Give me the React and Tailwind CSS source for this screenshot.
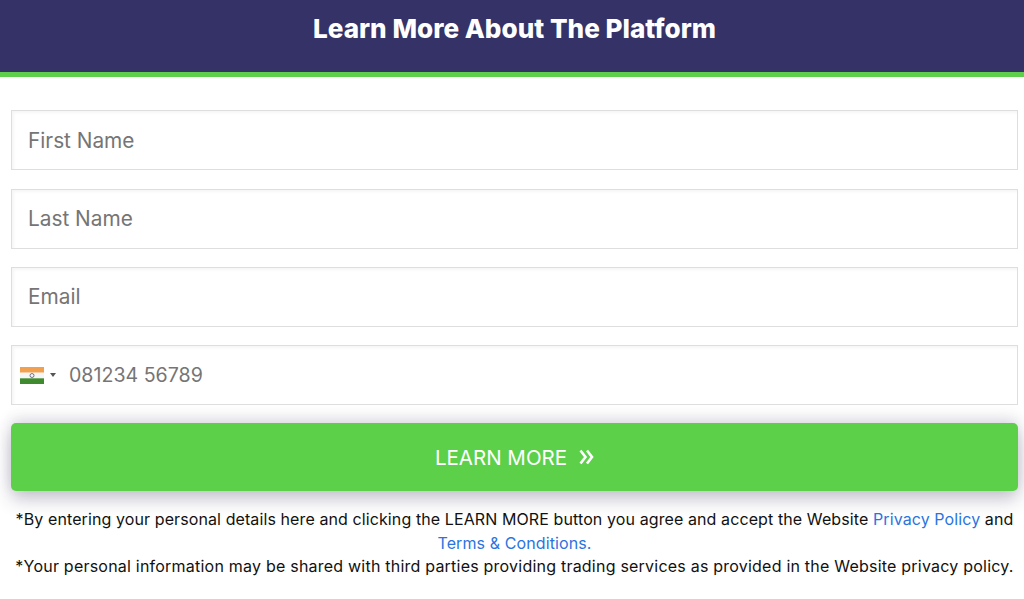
import React from 'react';

const fontStack = "font-['Inter','Noto_Sans',sans-serif]";

const TextField = ({ placeholder }) => (
  <div className="h-[60px] border border-[#dedede] bg-white shadow-[inset_2px_2px_3px_rgba(0,0,0,0.04)] flex items-center pl-[16px] text-[20.8px] text-[#757575]">
    {placeholder}
  </div>
);

const IndiaFlag = () => (
  <svg width="24" height="17" viewBox="0 0 24 17" className="block">
    <rect width="24" height="5.7" fill="#f0a04f" />
    <rect y="5.7" width="24" height="5.6" fill="#f5f5f5" />
    <rect y="11.3" width="24" height="5.7" fill="#3f8a2e" />
    <circle cx="12" cy="8.5" r="2" fill="none" stroke="#55557a" strokeWidth="0.8" />
  </svg>
);

const App = () => {
  return (
    <div className={`w-[1024px] h-[599px] overflow-hidden bg-white ${fontStack}`}>
      <header className="h-[77px] bg-[#343266] border-b-[5px] border-[#5dcf4a] flex justify-center pt-[12px] pl-[5px]">
        <h1 className="text-[26.1px] leading-[34px] font-extrabold text-white">Learn More About The Platform</h1>
      </header>

      <form className="pl-[11px] pr-[6px] pt-[33.4px] flex flex-col gap-[18.25px]">
        <TextField placeholder="First Name" />
        <TextField placeholder="Last Name" />
        <TextField placeholder="Email" />
        <div className="h-[60px] border border-[#dedede] bg-white shadow-[inset_2px_2px_3px_rgba(0,0,0,0.04)] flex items-center pl-2 text-[19.6px] text-[#757575]">
          <IndiaFlag />
          <span className="ml-[6px] mr-[13px] w-0 h-0 border-x-[3px] border-x-transparent border-t-[4px] border-t-[#555]" />
          <span className="mt-[1px]">081234 56789</span>
        </div>
        <button
          type="button"
          className="h-[68px] rounded-[5px] bg-[#5dd04a] pt-[1px] shadow-[0_8px_18px_rgba(60,50,90,0.3),0_-6px_14px_rgba(60,50,90,0.12)] flex items-center justify-center text-white text-[20.5px]"
        >
          LEARN MORE
          <svg width="15" height="16" viewBox="0 0 15 16" fill="none" stroke="currentColor" strokeWidth="2.6" className="ml-[12px] mb-[2px]">
            <path d="M1.5 1.5 6.5 8 1.5 14.5M8 1.5 13 8 8 14.5" />
          </svg>
        </button>
      </form>

      <div className="mt-[17px] pl-[11px] pr-[6px] text-center text-[16px] leading-[23.5px] text-[#111]">
        <p className="tracking-[0.1px]">
          *By entering your personal details here and clicking the LEARN MORE button you agree and accept the Website{' '}
          <a className="text-[#2a74e0]">Privacy Policy</a> and <a className="text-[#2a74e0]">Terms &amp; Conditions.</a>
        </p>
        <p className="tracking-[0.22px]">*Your personal information may be shared with third parties providing trading services as provided in the Website privacy policy.</p>
      </div>
    </div>
  );
};

export default App;
